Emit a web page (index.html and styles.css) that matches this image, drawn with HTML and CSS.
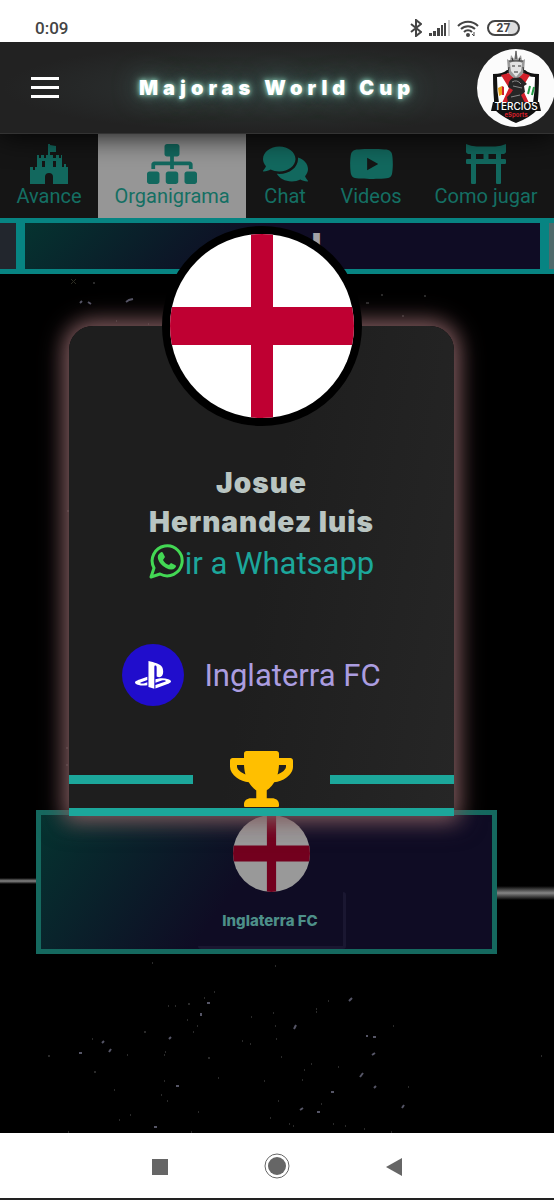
FILE: index.html
```html
<!DOCTYPE html>
<html lang="es">
<head>
  <meta charset="utf-8">
  <title>Majoras World Cup</title>
  <meta name="viewport" content="width=device-width, initial-scale=1">
  <link rel="stylesheet" href="styles.css">
</head>
<body>
  <div class="status">
    <span class="clock">0:09</span>
    <svg class="status-bt" viewBox="0 0 12 18"><path d="M1 5l10 8-5 4V1l5 4-10 8"/></svg>
    <svg class="status-signal" viewBox="0 0 22 16">
      <path d="M0 13h3v3H0zM4 11h3v5H4zM8 8h3v8H8zM12 5h2v11h-2zM15 3h2v13h-2z" fill="#444"/>
      <path d="M19 0h2v16h-2z" fill="#ccc"/>
    </svg>
    <svg class="status-wifi" viewBox="0 0 22 17">
      <path d="M1 6a14 14 0 0 1 20 0M4 9a10 10 0 0 1 14 0M7 12a5.500 5.500 0 0 1 8 0" fill="none" stroke="#444" stroke-width="2"/>
      <circle cx="11" cy="15" r="2" fill="#444"/>
      <path d="M17 12v4l-2-2" fill="none" stroke="#444"/>
    </svg>
    <span class="battery">27</span>
  </div>

  <header class="topbar">
    <button class="menu" aria-label="Menú"><span></span><span></span><span></span></button>
    <h1>Majoras World Cup</h1>
    <svg class="logo" viewBox="0 0 78 78" role="img" aria-label="Tercios eSports">
      <circle cx="39" cy="39" r="39" fill="#fbfbfb"/>
      <path d="M16 25q10 0 14-4h18q4 4 14 4 0 20-2 36-6 7-21 13-14-6-21-13-2-16-2-36z" fill="#111"/>
      <path d="M20 28q7 0 11-4h15q5 4 12 4 0 14-2 26H22q-2-12-2-26z" fill="#fff"/>
      <path d="M24 26l8-2 7 7 7-7 7 2-8 13 7 15h-9l-4-8-5 8h-9l7-15z" fill="#d3202b"/>
      <path d="M21 39l4-2 1 8-4 2z" fill="#e9a51d"/><path d="M25 37l2 1v8h-2z" fill="#d3202b"/>
      <path d="M51 45l2-8M55 46l2-8" stroke="#239a45" stroke-width="2"/>
      <path d="M32 33q4-7 12-4l6 6-3 2 1 6-4 3 4 8H31l-1-6 4-4 2-3-5-3z" fill="#262626"/>
      <path d="M35 33q5-3 9 2M36 37l9 2M34 48l9-2" stroke="#888" fill="none"/>
      <path d="M30 10l3 2 1-6 3 4 2-9 2 9 3-4 1 6 3-2-1 12q-2 6-8 7-6-1-8-7z" fill="#999"/>
      <path d="M33 14q6-4 12 0l-1 8-5 6-5-6z" fill="#e4e4e4"/>
      <path d="M32 12h14M35 17h3M41 17h3M37 23h4M39 2v8M32 18l-1 6M46 18l1 6M35 9l1 3M43 9l-1 3" stroke="#333"/>
      <path d="M16 53h46l2 9H14z" fill="#111"/>
      <text x="39" y="61" text-anchor="middle" class="logo-name">TERCIOS</text>
      <text x="39" y="68" text-anchor="middle" class="logo-sub">eSports</text>
    </svg>
  </header>

  <nav class="tabs">
    <a href="#avance">
      <svg viewBox="0 0 38 40"><path d="M18 0h2v1l6 1v6h-6v3h3v3h3v-3h3v3h2v-3h1v12h2v-3h2v3h2v17H23v-7q0-4-4-4t-4 4v7H0V23h3v3h2v-3h2V11h2v3h2v-3h3v3h2v-3h2zM12 17v6h3v-6zM23 17v6h3v-6z" fill-rule="evenodd"/></svg>
      <span>Avance</span>
    </a>
    <a href="#organigrama" class="active">
      <svg viewBox="0 0 640 512"><path d="M128 352H32c-17.670 0-32 14.330-32 32v96c0 17.670 14.330 32 32 32h96c17.670 0 32-14.330 32-32v-96c0-17.670-14.330-32-32-32zm-24-80h192v48h48v-48h192v48h48v-57.590c0-21.170-17.230-38.410-38.410-38.410H344v-64h40c17.670 0 32-14.330 32-32V32c0-17.670-14.330-32-32-32H256c-17.670 0-32 14.330-32 32v96c0 17.670 14.330 32 32 32h40v64H94.410C73.230 224 56 241.230 56 262.410V320h48v-48zm264 80h-96c-17.670 0-32 14.330-32 32v96c0 17.670 14.330 32 32 32h96c17.670 0 32-14.330 32-32v-96c0-17.670-14.330-32-32-32zm240 0h-96c-17.670 0-32 14.330-32 32v96c0 17.670 14.330 32 32 32h96c17.670 0 32-14.330 32-32v-96c0-17.670-14.330-32-32-32z"/></svg>
      <span>Organigrama</span>
    </a>
    <a href="#chat">
      <svg viewBox="0 0 576 512"><path d="M416 192c0-88.400-93.100-160-208-160S0 103.600 0 192c0 34.300 14.100 65.900 38 92-13.400 30.200-35.500 54.200-35.800 54.500-2.200 2.300-2.800 5.700-1.500 8.700S4.800 352 8 352c36.600 0 66.900-12.300 88.700-25 32.200 15.700 70.300 25 111.300 25 114.900 0 208-71.600 208-160zm122 220c23.900-26 38-57.700 38-92 0-66.900-53.500-124.200-129.300-148.100.9 6.600 1.300 13.300 1.300 20.100 0 105.900-107.700 192-240 192-10.800 0-21.300-.8-31.700-1.900C207.800 439.600 281.800 480 368 480c41 0 79.100-9.200 111.300-25 21.800 12.700 52.100 25 88.700 25 3.200 0 6.100-1.900 7.300-4.800 1.300-2.900.7-6.300-1.500-8.700-.3-.3-22.400-24.200-35.800-54.500z"/></svg>
      <span>Chat</span>
    </a>
    <a href="#videos">
      <svg viewBox="0 0 576 512"><path d="M549.655 124.083c-6.281-23.650-24.787-42.276-48.284-48.597C458.781 64 288 64 288 64S117.220 64 74.629 75.486c-23.497 6.322-42.003 24.947-48.284 48.597-11.412 42.867-11.412 132.305-11.412 132.305s0 89.438 11.412 132.305c6.281 23.650 24.787 41.500 48.284 47.821C117.220 448 288 448 288 448s170.780 0 213.371-11.486c23.497-6.321 42.003-24.171 48.284-47.821 11.412-42.867 11.412-132.305 11.412-132.305s0-89.438-11.412-132.305zm-317.510 213.508V175.185l142.739 81.205-142.739 81.201z"/></svg>
      <span>Videos</span>
    </a>
    <a href="#como-jugar">
      <svg viewBox="0 0 512 512"><path d="M376.450 32h-240.900A303.170 303.170 0 0 1 0 0v96c0 17.670 14.330 32 32 32h32v64H16c-8.840 0-16 7.160-16 16v32c0 8.840 7.160 16 16 16h48v240c0 8.840 7.160 16 16 16h32c8.840 0 16-7.160 16-16V256h256v240c0 8.840 7.160 16 16 16h32c8.840 0 16-7.160 16-16V256h48c8.840 0 16-7.160 16-16v-32c0-8.840-7.160-16-16-16h-48v-64h32c17.670 0 32-14.330 32-32V0a303.170 303.170 0 0 1-135.550 32zM128 128h96v64h-96v-64zm256 64h-96v-64h96v64z"/></svg>
      <span>Como jugar</span>
    </a>
  </nav>

  <div class="round">
    <div class="round-title">l</div>
  </div>

  <main class="scene">
    <!-- stars and the bracket connectors -->
    <svg class="stars" viewBox="0 0 554 859" preserveAspectRatio="xMidYMin slice" aria-hidden="true">
      <defs>
        <linearGradient id="pole" x1="0" y1="0" x2="0" y2="1">
          <stop offset="0" stop-color="#000"/>
          <stop offset=".5" stop-color="#858585"/>
          <stop offset="1" stop-color="#000"/>
        </linearGradient>
      </defs>
      <rect x="0" y="604" width="60" height="6" fill="url(#pole)"/>
      <rect x="480" y="612" width="74" height="14" fill="url(#pole)"/>
      <path d="M71 5l5 5M76 5l-5 5" stroke="#2c2c22"/>
      <path class="dim" d="M94 8v2M116 47h1M148 50h1M366 29h3M381 21h2M424 22h2M402 42h2M68 236v2M67 473v2M67 490v2M152 689h1M275 692h1M214 718h1M204 724h1M168 732h1M175 732h1M188 730h2M187 746h1M197 752h1M193 758h1M144 758h2M92 765h1M127 781h1M165 778h1M164 781h1M48 782h2M208 784h2M94 798h2M218 804h1M164 807h1M114 816h1M161 821h1M167 827h1M198 838h1M130 841h1M119 846h1M328 727h1M316 735h1M316 738h1M251 743h1M273 739h1M275 752h1M393 752h1M276 765h1M242 767h1M250 770h1M281 783h1M541 782h1M311 790h1M338 793h1M304 796h1M302 806h1M264 807h1M408 813h1M278 827h1M321 830h1M270 844h1M289 850h1M293 852h1M333 850h1M345 852h1M364 855h1M391 858h1M68 858h1M191 858h1"/>
      <path class="bright" d="M80 29l2-2M88 28l3 2M126 28l3-2 4-1M207 729h3M201 739v3M169 765l2-2M102 769l2-2M109 778l2-3M79 779h3M176 812h3M154 853h3M349 727l3-3M294 755l2-4M366 762h2M373 763h3M372 781l3-2M360 803l3-4M374 814l2-2M331 818h3M402 834l2-3M300 836l3-2M317 838h3"/>
    </svg>

    <section class="card">
      <svg class="avatar" viewBox="0 0 184 184" role="img" aria-label="Inglaterra">
        <path d="M0 0h184v184H0z" fill="#fff"/>
        <path d="M81 0h22v184H81zM0 73h184v38H0z" fill="#bf0032"/>
      </svg>
      <h2>Josue<br>Hernandez luis</h2>
      <a class="whatsapp" href="#whatsapp">
        <svg viewBox="0 0 36 36">
          <path d="M2 34l3-9a15 15 0 1 1 6 6z" fill="none" stroke="#43d854" stroke-width="3" stroke-linejoin="round"/>
          <path d="M11 10q2-2 3 0l2 4-2 3q2 4 6 5l2-2 4 2q2 1 0 3-3 3-9 0-6-3-8-9-1-4 2-6z" fill="#43d854"/>
        </svg>
        <span>ir a Whatsapp</span>
      </a>
      <div class="console">
        <span class="ps">
          <svg viewBox="0 0 576 512"><path d="M570.900 372.300c-11.300 14.200-38.800 24.300-38.800 24.300L327 470.200v-54.300l150.900-53.800c17.100-6.100 19.800-14.800 5.800-19.400-13.900-4.600-39.100-3.300-56.200 2.900L327 381.100v-56.400c23.200-7.800 47.100-13.600 75.700-16.800 40.900-4.500 90.900.6 130.200 15.500 44.200 14 49.200 34.700 38 48.900zm-224.400-92.500v-139c0-16.300-3-31.300-18.300-35.600-11.700-3.800-19 7.100-19 23.400v347.900l-93.800-29.800V32c39.900 7.400 98 24.900 129.200 35.400C424.100 94.700 451 128.700 451 205.200c0 74.500-46 102.800-104.500 74.600zM43.200 410.200c-45.400-12.800-53-39.500-32.300-54.800 19.100-14.200 51.700-24.900 51.700-24.900l134.500-47.800v54.500l-96.800 34.600c-17.100 6.100-19.700 14.800-5.800 19.400 13.900 4.600 39.100 3.300 56.200-2.900l46.400-16.900v48.800c-51.600 9.300-101.400 7.300-153.900-10z"/></svg>
        </span>
        <span>Inglaterra FC</span>
      </div>
      <div class="trophy">
        <span class="bar"></span>
        <svg viewBox="0 0 576 512"><path d="M552 64H448V24c0-13.300-10.700-24-24-24H152c-13.300 0-24 10.700-24 24v40H24C10.700 64 0 74.700 0 88v56c0 35.700 22.500 72.400 61.900 100.700 31.500 22.700 69.800 37.100 110 41.700C203.300 338.500 240 360 240 360v72h-48c-35.300 0-64 20.700-64 56v12c0 6.600 5.400 12 12 12h296c6.600 0 12-5.400 12-12v-12c0-35.300-28.700-56-64-56h-48v-72s36.700-21.500 68.100-73.600c40.300-4.600 78.600-19 110-41.700 39.300-28.300 61.900-65 61.900-100.700V88c0-13.300-10.700-24-24-24zM99.300 192.800C74.900 175.200 64 155.600 64 144v-16h64.200c1 32.600 5.800 61.200 12.800 86.200-15.100-5.200-29.200-12.400-41.700-21.400zM512 144c0 16.100-17.700 36.100-35.300 48.800-12.500 9-26.700 16.200-41.800 21.400 7-25 11.800-53.600 12.800-86.200H512v16z"/></svg>
        <span class="bar"></span>
      </div>
    </section>

    <section class="team">
      <svg class="team-flag" viewBox="0 0 184 184" role="img" aria-label="Inglaterra">
        <path d="M0 0h184v184H0z" fill="#999"/>
        <path d="M81 0h22v184H81zM0 73h184v38H0z" fill="#73001e"/>
      </svg>
      <button class="team-name">Inglaterra FC</button>
    </section>
  </main>

  <footer class="phone-nav">
    <button aria-label="Recientes"><svg viewBox="0 0 26 26"><path d="M5 6h16v16H5z"/></svg></button>
    <button aria-label="Inicio"><svg viewBox="0 0 26 26"><circle cx="13" cy="13" r="9"/><circle cx="13" cy="13" r="12" fill="none" stroke="#666"/></svg></button>
    <button aria-label="Atrás"><svg viewBox="0 0 26 26"><path d="M5 14L21 5v18z"/></svg></button>
  </footer>
</body>
</html>
```

FILE: styles.css
```css
* { box-sizing: border-box; }
body { margin: 0; min-height: 100vh; display: flex; flex-direction: column;
       background: #000; font-family: Roboto, sans-serif; overflow-x: hidden; }
h1, h2 { margin: 0; font-family: Inter, sans-serif; font-weight: 900; }
button { border: none; background: none; padding: 0; cursor: pointer; }
a { text-decoration: none; }
svg { display: block; flex: none; }

/* phone status bar */
.status { height: 42px; padding: 14px 34px 0 35px; display: flex; align-items: center; position: relative; z-index: 3;
          background: #fff; color: #444; }
.clock { margin-right: auto; font-size: 17px; font-weight: 500; }
.status-bt { width: 12px; height: 18px; margin-right: 7px; fill: none; stroke: #444; stroke-width: 2; }
.status-signal { width: 22px; height: 16px; margin-right: 6px; }
.status-wifi { width: 22px; height: 17px; margin-right: 8px; }
.battery { width: 33px; height: 16px; border: 2px solid #444; border-radius: 8px; font-size: 12px; font-weight: 700;
           line-height: 12px; text-align: center; background: linear-gradient(to right, #fff 65%, #ddd 65%); }

/* header */
.topbar { height: 92px; padding-left: 31px; display: flex; align-items: center; position: relative; z-index: 2;
          background: radial-gradient(ellipse at 50% 50%, #2b3434, #282b2b 40%, #222 70%); border-bottom: 1px solid #333;
          box-shadow: 0 0 30px #000; }
.menu { display: grid; gap: 6px; width: 28px; }
.menu span { height: 3px; background: #fff; }
.topbar h1 { flex: 1; padding-left: 18px; text-align: center; font-size: 20px; letter-spacing: 5px; color: #fff;
             text-shadow: 0 0 4px #8fd4be, 0 0 10px #7fbeac, 0 0 26px #5a8478; }
.logo { width: 78px; height: 78px; margin-right: -1px; }
.logo-name { font: 500 10px Inter, sans-serif; fill: #fff; }
.logo-sub { font: bold 6px Inter, sans-serif; fill: #d3202b; }

.tabs { height: 84px; display: flex; background: #151515; }
.tabs a { flex: 1 0 auto; padding: 10px 16px 0; display: flex; flex-direction: column; align-items: center; gap: 1px;
          font-size: 20px; line-height: 23px; white-space: nowrap; color: #146f63; }
.tabs svg { height: 40px; fill: #12685e; }
.tabs .active { background: #969696; }

/* strip with the round on show */
.round { height: 56px; padding: 0 5px 0 16px; border-top: 5px solid #078482; border-bottom: 5px solid #078482;
         background: linear-gradient(to right, #22262d 50%, #4e6a6b 50%); }
.round-title { height: 46px; padding-left: 68px; border: solid #078482; border-width: 0 9px; text-align: center;
               background: linear-gradient(135deg, #053330, #0f0c24 45%); color: #a2a2a8;
               font: 900 34px/46px Inter, sans-serif; }

.scene { flex: 1; position: relative; padding-top: 52px; }
.stars { position: absolute; top: 0; left: 0; width: 100%; height: 100%; }
.stars path { fill: none; }
.dim { stroke: #555; stroke-width: 1; }
.bright { stroke: #556; stroke-width: 2; }

/* player card */
.card { position: relative; z-index: 1; min-height: 490px; margin: 0 100px 0 69px; display: flex; flex-direction: column;
        align-items: center; border-radius: 24px 24px 0 0; border-bottom: 8px solid #1ca79b;
        background: linear-gradient(100deg, #1e1e1e 50%, #262626); box-shadow: 0 0 26px 6px #86606480, 0 0 20px 2px #7a5558; }
.avatar { width: 200px; height: 200px; margin-top: -100px; border: 8px solid #000; border-radius: 50%; background: #000; }
.card h2 { margin-top: 38px; font-size: 28px; line-height: 39px; letter-spacing: 1px; text-align: center; color: #b9c5c2; }
.whatsapp { display: flex; align-items: center; font-size: 31px; line-height: 44px; color: #1ca79b; }
.whatsapp svg { width: 36px; height: 36px; margin-top: -6px; }
.console { margin: 58px 0 45px; padding-right: 20px; display: flex; align-items: center; gap: 20px;
           font-size: 31px; color: #ab9de0; }
.ps { width: 62px; height: 62px; display: grid; place-items: center; border-radius: 50%; background: #200dcc; }
.ps svg { width: 36px; fill: #fff; }
.trophy { width: 100%; display: flex; align-items: center; justify-content: space-between; }
.trophy svg { width: 63px; fill: #ffbf00; }
.bar { flex: 0 0 124px; height: 9px; background: #1ca79b; }

/* team box under the card */
.team { height: 144px; margin: -6px 57px 0 36px; position: relative; display: flex; flex-direction: column; align-items: center;
        padding-left: 10px; border: 5px solid #15695f; background: linear-gradient(125deg, #053330, #0f0c24 45%); }
.team-flag { width: 77px; height: 77px; border-radius: 50%; }
.team-name { width: 148px; height: 57px; padding-top: 3px; border-right: 3px solid #1a1731; border-bottom: 3px solid #1a1731;
             border-radius: 3px; font: 800 15px Inter, sans-serif; color: #4d9089; }

.phone-nav { height: 67px; padding: 0 147px; display: flex; align-items: center; justify-content: space-between;
             background: #fff; border-bottom: 2px solid #222; }
.phone-nav svg { width: 26px; height: 26px; fill: #666; }
```
